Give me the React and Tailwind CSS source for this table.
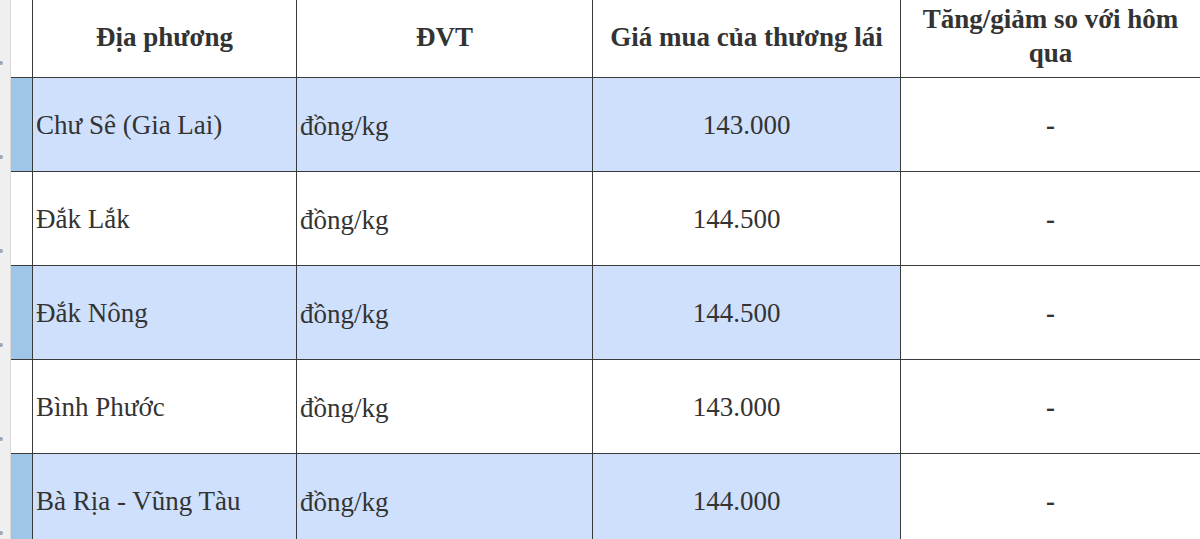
import React from "react";

const rows = [
  { place: "Chư Sê (Gia Lai)", price: "143.000", blue: true, shift: false },
  { place: "Đắk Lắk", price: "144.500", blue: false, shift: true },
  { place: "Đắk Nông", price: "144.500", blue: true, shift: true },
  { place: "Bình Phước", price: "143.000", blue: false, shift: true },
  { place: "Bà Rịa - Vũng Tàu", price: "144.000", blue: true, shift: true },
];

export default function App() {
  return (
    <div className="w-[1200px] h-[539px] overflow-hidden bg-white flex font-[family-name:'Liberation_Serif',serif] text-[#333]">
      <div className="w-[11px] shrink-0 bg-[#efefef] border-r border-[#d9d9d9] flex flex-col pt-[61px] gap-[90px]">
        {[0, 1, 2, 3, 4, 5].map((i) => (
          <div key={i} className="w-[3px] h-[4px] bg-[#9aa8b8] rounded-r-sm" />
        ))}
      </div>
      <div className="flex-1 flex flex-col">
        <div className="flex h-[78px] shrink-0 border-b border-[#3a3a3a] font-bold text-[27px] leading-[34px]">
          <div className="w-[22px] shrink-0 border-r border-[#3a3a3a]" />
          <div className="w-[264px] shrink-0 border-r border-[#3a3a3a] flex items-center justify-center pb-[4px]">
            Địa phương
          </div>
          <div className="w-[296px] shrink-0 border-r border-[#3a3a3a] flex items-center justify-center pb-[4px]">
            ĐVT
          </div>
          <div className="w-[308px] shrink-0 border-r border-[#3a3a3a] flex items-center justify-center pb-[4px]">
            Giá mua của thương lái
          </div>
          <div className="flex-1 flex items-center justify-center text-center px-[12px] pb-[5px]">
            Tăng/giảm so với hôm qua
          </div>
        </div>
        {rows.map((r, i) => (
          <div
            key={i}
            className="flex h-[94px] shrink-0 border-b border-[#3a3a3a] text-[27px] leading-[32px]"
          >
            <div
              className={
                "w-[22px] shrink-0 border-r border-[#3a3a3a] " +
                (r.blue ? "bg-[#9fc5e8]" : "bg-white")
              }
            />
            <div
              className={
                "w-[264px] shrink-0 border-r border-[#3a3a3a] flex items-center pl-[3px] " +
                (r.blue ? "bg-[#cfe0fc]" : "bg-white")
              }
            >
              {r.place}
            </div>
            <div
              className={
                "w-[296px] shrink-0 border-r border-[#3a3a3a] flex items-center pl-[3px] pt-[2px] " +
                (r.blue ? "bg-[#cfe0fc]" : "bg-white")
              }
            >
              đồng/kg
            </div>
            <div
              className={
                "w-[308px] shrink-0 border-r border-[#3a3a3a] flex items-center justify-center " +
                (r.shift ? "pr-[20px] " : "") +
                (r.blue ? "bg-[#cfe0fc]" : "bg-white")
              }
            >
              {r.price}
            </div>
            <div className="flex-1 flex items-center justify-center font-bold">-</div>
          </div>
        ))}
      </div>
    </div>
  );
}
